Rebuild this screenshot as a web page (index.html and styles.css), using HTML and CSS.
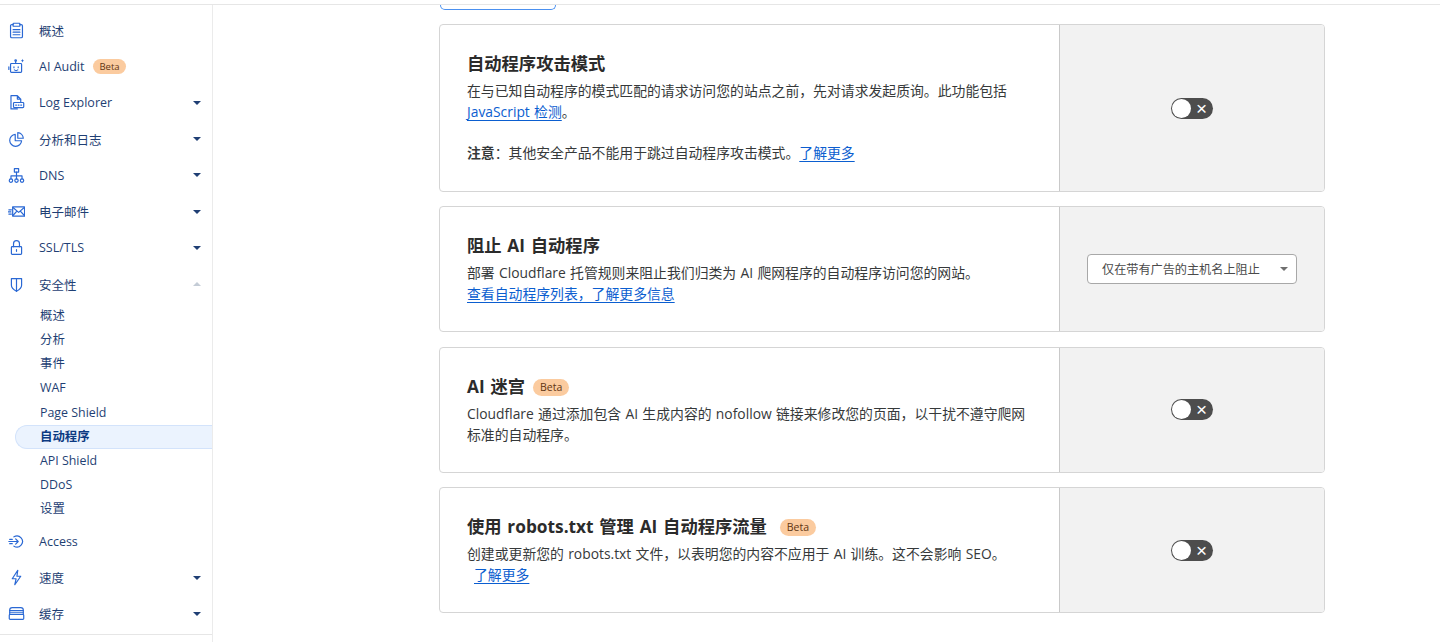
FILE: index.html
```html
<!DOCTYPE html>
<html lang="zh-CN">
<head>
<meta charset="utf-8">
<title>自动程序</title>
<link rel="stylesheet" href="styles.css">
</head>
<body>
<div class="app">
  <aside class="sidebar">
    <nav class="nav">
      <div class="row"><span class="ico"><svg viewBox="0 0 20 20"><path d="M6 3H4.500A1.500 1.500 0 0 0 3 4.500V17a1.500 1.500 0 0 0 1.500 1.500h11A1.500 1.500 0 0 0 17 17V4.500A1.500 1.500 0 0 0 15.500 3H14"/><rect x="6" y="1.500" width="8" height="3.500" rx=".7"/><path d="M6 9h8M6 12h8M6 15h8"/></svg></span><span class="label">概述</span></div>
      <div class="row"><span class="ico"><svg viewBox="0 0 20 20"><rect x="3" y="6.500" width="13" height="10.500" rx="1"/><path d="M9 6.500V4M1 10.500v3M7 10.500v1M12 10.500v1M7.500 14c1 .8 3 .8 4 0"/><circle cx="9" cy="3" r=".9"/><path class="solid" d="M17 1l.6 1.500 1.400.6-1.400.6-.6 1.500-.6-1.500-1.400-.6 1.400-.6z"/></svg></span><span class="label">AI Audit</span><span class="badge small">Beta</span></div>
      <div class="row"><span class="ico"><svg viewBox="0 0 20 20"><path d="M11 17.500H3.500V2H11l4 4v3M11 2v4h4"/><rect x="6.500" y="10" width="12" height="6" rx="1"/><path d="M9 13h1M12 13h1M15 13h1"/></svg></span><span class="label">Log Explorer</span><span class="caret"></span></div>
      <div class="row"><span class="ico"><svg viewBox="0 0 20 20"><path d="M8.500 4a7 7 0 1 0 7.500 7.500H8.500z"/><path d="M11.500 2a7 7 0 0 1 6.500 6.500h-6.500z"/></svg></span><span class="label">分析和日志</span><span class="caret"></span></div>
      <div class="row"><span class="ico"><svg viewBox="0 0 20 20"><rect x="7.500" y="2" width="5" height="4"/><path d="M10 6v8M3.500 14v-3.500h13V14"/><circle cx="3.500" cy="16" r="2"/><circle cx="10" cy="16" r="2"/><circle cx="16.500" cy="16" r="2"/></svg></span><span class="label">DNS</span><span class="caret"></span></div>
      <div class="row"><span class="ico"><svg viewBox="0 0 20 20"><rect x="5.500" y="4.500" width="14" height="11" rx=".8"/><path d="M5.500 5l7 6 7-6M5.500 15l5-5.500M19.500 15l-5-5.500M1 8h3M0 10.500h3.500M1 13h3"/></svg></span><span class="label">电子邮件</span><span class="caret"></span></div>
      <div class="row"><span class="ico"><svg viewBox="0 0 20 20"><rect x="4" y="9" width="12" height="9" rx="1"/><path d="M6.500 9V5.500a3.500 3.500 0 0 1 7 0V9M10 12.500v2"/></svg></span><span class="label">SSL/TLS</span><span class="caret"></span></div>
      <div class="row"><span class="ico"><svg viewBox="0 0 20 20"><path d="M4 3h12v8c0 3.500-3 5.500-6 7-3-1.500-6-3.500-6-7z"/><path d="M10 3v15"/></svg></span><span class="label">安全性</span><span class="caret up"></span></div>
      <ul class="subnav">
        <li class="sub">概述</li>
        <li class="sub">分析</li>
        <li class="sub">事件</li>
        <li class="sub">WAF</li>
        <li class="sub">Page Shield</li>
        <li class="sub active">自动程序</li>
        <li class="sub">API Shield</li>
        <li class="sub">DDoS</li>
        <li class="sub">设置</li>
      </ul>
      <div class="row"><span class="ico"><svg viewBox="0 0 20 20"><path d="M7 4.500a6.500 6.500 0 1 1 0 11M1 10h11M9 7l3 3-3 3M2 7.500h3M2 12.500h3"/></svg></span><span class="label">Access</span></div>
      <div class="row"><span class="ico"><svg viewBox="0 0 20 20"><path d="M11.500 1.500L5 11.500h4.500L8 18.500l7-10h-4.500z"/></svg></span><span class="label">速度</span><span class="caret"></span></div>
      <div class="row"><span class="ico"><svg viewBox="0 0 20 20"><path d="M5 3h10a3 3 0 0 1 3 3v2.500H2V6a3 3 0 0 1 3-3z"/><rect x="1.500" y="11" width="17" height="6" rx="1"/><path d="M2 8.500V11M18 8.500V11M2 6.500h16"/></svg></span><span class="label">缓存</span><span class="caret"></span></div>
    </nav>
    <div class="side-foot"></div>
  </aside>
  <main class="content">
    <div class="stub"></div>
    <section class="card tall">
      <div class="body">
        <h2 class="title">自动程序攻击模式</h2>
        <p class="desc">在与已知自动程序的模式匹配的请求访问您的站点之前，先对请求发起质询。此功能包括 <a class="link">JavaScript 检测</a>。</p>
        <p class="desc note"><b class="strong">注意</b>：其他安全产品不能用于跳过自动程序攻击模式。<a class="link">了解更多</a></p>
      </div>
      <div class="panel"><span class="toggle"><span class="knob"></span><span class="x">×</span></span></div>
    </section>
    <section class="card">
      <div class="body">
        <h2 class="title">阻止 AI 自动程序</h2>
        <p class="desc">部署 Cloudflare 托管规则来阻止我们归类为 AI 爬网程序的自动程序访问您的网站。<br><a class="link">查看自动程序列表，了解更多信息</a></p>
      </div>
      <div class="panel"><div class="select"><span>仅在带有广告的主机名上阻止</span><span class="caret grey"></span></div></div>
    </section>
    <section class="card">
      <div class="body">
        <h2 class="title">AI 迷宫<span class="badge near">Beta</span></h2>
        <p class="desc">Cloudflare 通过添加包含 AI 生成内容的 nofollow 链接来修改您的页面，以干扰不遵守爬网标准的自动程序。</p>
      </div>
      <div class="panel"><span class="toggle"><span class="knob"></span><span class="x">×</span></span></div>
    </section>
    <section class="card">
      <div class="body">
        <h2 class="title">使用 robots.txt 管理 AI 自动程序流量<span class="badge">Beta</span></h2>
        <p class="desc">创建或更新您的 robots.txt 文件，以表明您的内容不应用于 AI 训练。这不会影响 SEO。<br><a class="link indent">了解更多</a></p>
      </div>
      <div class="panel"><span class="toggle"><span class="knob"></span><span class="x">×</span></span></div>
    </section>
  </main>
</div>
</body>
</html>
```
FILE: styles.css
```css
* { box-sizing: border-box; }
html, body { margin: 0; height: 642px; overflow: hidden; background: #fff; }
body {
  padding-top: 4px;
  font-family: "Open Sans", "Noto Sans CJK SC", sans-serif;
  color: #36393a;
}
.app {
  display: flex;
  height: 638px;
  border-top: 1px solid #e6e6e6;
}
.sidebar {
  width: 213px;
  flex: none;
  border-right: 1px solid #ebebeb;
  display: flex;
  flex-direction: column;
}
.nav { padding-top: 7px; height: 629px; }
.side-foot { border-top: 1px solid #e6e6e6; flex: 1; }
.row {
  height: 36.3px;
  display: flex;
  align-items: center;
  padding: 0 11px 0 5px;
  font-size: 12.500px;
  color: #1f3f74;
}
.ico { width: 22px; height: 22px; margin-right: 12px; flex: none; display: flex; align-items: center; justify-content: center; }
.ico svg { width: 17px; height: 17px; fill: none; stroke: #2a68d4; stroke-width: 1.400; stroke-linecap: round; stroke-linejoin: round; }
.ico svg .solid { fill: #2a68d4; stroke: none; }
.label { white-space: nowrap; }
.caret {
  margin-left: auto;
  width: 0;
  height: 0;
  border-left: 4.500px solid transparent;
  border-right: 4.500px solid transparent;
  border-top: 4.500px solid #1f3f74;
}
.caret.up { border-top: 0; border-bottom: 4.500px solid #c4ccd6; }
.caret.grey { border-top-color: #6f6f6f; }
.subnav { list-style: none; margin: 0; padding: 1.500px 0; }
.sub {
  height: 24.2px;
  line-height: 24.2px;
  padding-left: 40px;
  font-size: 12.400px;
  color: #1f3f74;
  white-space: nowrap;
}
.sub.active {
  margin-left: 15px;
  padding-left: 24px;
  line-height: 22px;
  background: #ebf3fe;
  border: 1px solid #d3e3fb;
  border-right: 0;
  border-radius: 12px 0 0 12px;
  font-weight: 700;
  color: #0b3a82;
}
.badge {
  display: inline-block;
  margin-left: 13px;
  padding: 0 7px;
  height: 17px;
  line-height: 17px;
  font-size: 10.500px;
  font-weight: 400;
  word-spacing: 0;
  color: #5f3512;
  background: #fbcb9f;
  border-radius: 9px;
  vertical-align: 2px;
}
.badge.near { margin-left: 8px; }
.badge.small { margin-left: 9px; padding: 0 6px; height: 15px; line-height: 15px; font-size: 9.500px; }
.content { flex: 1; padding: 0 115px 0 226px; min-width: 0; }
.stub {
  width: 116px;
  height: 5px;
  margin: 0 0 14px 1px;
  border: 1px solid #4a90f0;
  border-top: 0;
  border-radius: 0 0 10px 10px;
}
.card {
  display: grid;
  grid-template-columns: 1fr 265px;
  min-height: 126.2px;
  margin-bottom: 14.200px;
  border: 1px solid #d5d5d5;
  border-radius: 4px;
  overflow: hidden;
}
.card.tall { min-height: 168px; }
.body { padding: 27px 27px 0; }
.title {
  margin: 0 0 4px;
  height: 24px;
  line-height: 24px;
  font-size: 17.300px;
  font-weight: 700;
  word-spacing: 1.300px;
  color: #2b2b2b;
  white-space: nowrap;
}
.desc { margin: 0; font-size: 13.850px; line-height: 21px; word-spacing: .7px; color: #36393a; }
.note { margin-top: 20px; }
.strong { font-weight: 700; }
.link { color: #0b5ed0; text-decoration: underline; text-underline-offset: 3px; text-decoration-thickness: 1px; }
.indent { margin-left: 7px; }
.panel {
  background: #f2f2f2;
  border-left: 1px solid #c9c9c9;
  display: flex;
  align-items: center;
  justify-content: center;
}
.toggle {
  width: 42px;
  height: 21px;
  border-radius: 11px;
  background: #4d4d4d;
  display: flex;
  align-items: center;
  padding: 0 1px;
}
.knob { width: 19px; height: 19px; border-radius: 50%; background: #fff; flex: none; }
.x { flex: 1; text-align: center; color: #fff; font-size: 19px; line-height: 19px; font-family: "Liberation Sans", sans-serif; }
.select {
  width: 210px;
  height: 30px;
  display: flex;
  align-items: center;
  justify-content: space-between;
  padding: 0 8px 0 14px;
  background: #fff;
  border: 1px solid #a8a8a8;
  border-radius: 4px;
  font-size: 12.150px;
  color: #4a4a4a;
}
```
